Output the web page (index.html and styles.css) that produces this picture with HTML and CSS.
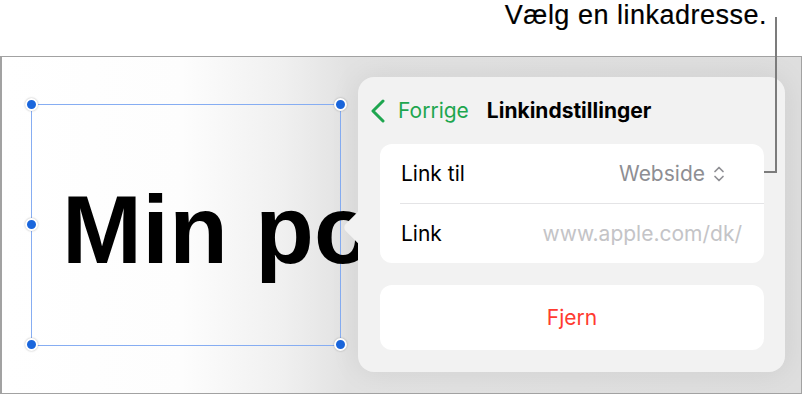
FILE: index.html
```html
<!DOCTYPE html>
<html lang="da">
<head>
<meta charset="utf-8">
<link rel="stylesheet" href="styles.css">
</head>
<body>
<div class="callout"><span class="callout-text">Vælg en linkadresse.</span></div>
<div class="callout-line"></div>
<div class="canvas">
  <div class="selection">
    <span class="title">Min po</span>
    <i class="handle h-tl"></i><i class="handle h-tr"></i><i class="handle h-ml"></i><i class="handle h-bl"></i><i class="handle h-br"></i>
  </div>
  <div class="popover">
    <div class="arrow"></div>
    <div class="pop-header">
      <svg class="back-chev" width="16" height="24" viewBox="0 0 16 24"><polyline points="13,2 3,12 13,22" fill="none" stroke="#1ea64f" stroke-width="3" stroke-linecap="round" stroke-linejoin="round"/></svg>
      <span class="back-label">Forrige</span>
      <span class="pop-title">Linkindstillinger</span>
    </div>
    <div class="card">
      <div class="row row-first">
        <span class="label">Link til</span>
        <span class="value">Webside</span>
        <svg class="updown" width="12" height="18" viewBox="0 0 12 18"><polyline points="2,6.5 6,2.5 10,6.5" fill="none" stroke="#8e8e93" stroke-width="1.7" stroke-linecap="round" stroke-linejoin="round"/><polyline points="2,11.5 6,15.5 10,11.5" fill="none" stroke="#8e8e93" stroke-width="1.7" stroke-linecap="round" stroke-linejoin="round"/></svg>
      </div>
      <div class="divider"></div>
      <div class="row">
        <span class="label">Link</span>
        <span class="url">www.apple.com/dk/</span>
      </div>
    </div>
    <div class="card remove">Fjern</div>
  </div>
</div>
</body>
</html>
```
FILE: styles.css
```css
* { box-sizing: border-box; }
html, body { margin: 0; padding: 0; }
body {
  width: 804px;
  height: 395px;
  overflow: hidden;
  background: #fff;
  position: relative;
  font-family: Inter, "Liberation Sans", sans-serif;
}
.callout {
  height: 56px;
  display: flex;
  justify-content: flex-end;
  align-items: flex-start;
  padding: 0 37px 0 0;
}
.callout-text {
  font-family: "Liberation Sans", Arial, sans-serif;
  font-size: 27px;
  line-height: normal;
  letter-spacing: 0.5px;
  color: #000;
  -webkit-text-stroke: 0.2px #000;
}
.callout-line {
  position: absolute;
  left: 764px;
  top: 17px;
  width: 13px;
  height: 156px;
  border-right: 2px solid #7c7c7c;
  border-bottom: 2px solid #7c7c7c;
  z-index: 5;
}
.canvas {
  position: relative;
  width: 802px;
  height: 338px;
  border: 1px solid #a2a2a2;
  border-left-width: 2px;
  overflow: hidden;
  background: linear-gradient(90deg, #ffffff 0, #fdfdfd 180px, #f0f0f0 280px, #e2e2e2 345px, #dedede 100%);
}
.selection {
  position: absolute;
  left: 29px;
  top: 47px;
  width: 310px;
  height: 242px;
  border: 1px solid #86adf2;
  padding: 77px 0 0 30px;
  display: flex;
  align-items: flex-start;
}
.title {
  font-family: "Liberation Sans", Arial, sans-serif;
  font-weight: bold;
  font-size: 96px;
  line-height: 96px;
  color: #000;
  white-space: nowrap;
  letter-spacing: 0.3px;
}
.handle {
  position: absolute;
  width: 13px;
  height: 13px;
  border-radius: 50%;
  background: #1a66dc;
  border: 2px solid #fff;
  box-shadow: 0 0 2px rgba(0,0,0,0.3);
  margin: -7px 0 0 -7px;
}
.h-tl { left: 0; top: 0; }
.h-tr { left: 309px; top: 0; }
.h-ml { left: 0; top: 120px; }
.h-bl { left: 0; top: 240px; }
.h-br { left: 309px; top: 240px; }
.popover {
  position: absolute;
  left: 356px;
  top: 20px;
  width: 427px;
  height: 295px;
  background: #f2f2f2;
  border-radius: 16px;
  box-shadow: 0 0 30px rgba(0,0,0,0.08);
  padding: 0 21px 0 22px;
  z-index: 2;
}
.arrow {
  position: absolute;
  left: -11px;
  top: 139px;
  width: 23px;
  height: 23px;
  background: #f2f2f2;
  transform: rotate(45deg);
  border-radius: 0 0 0 5px;
}
.pop-header {
  height: 67px;
  display: flex;
  align-items: center;
  margin-left: -10px;
  position: relative;
}
.back-chev { margin-right: 12px; margin-top: 1px; }
.back-label {
  color: #1ea64f;
  font-size: 21px;
  margin-right: 18px;
}
.pop-title {
  font-weight: 700;
  font-size: 21px;
  color: #000;
}
.card {
  background: #fff;
  border-radius: 12px;
}
.row {
  height: 59px;
  display: flex;
  align-items: center;
  padding: 0 22px 0 21px;
  font-size: 21px;
}
.row-first { padding-right: 39px; }
.label { color: #000; flex: 1; }
.value { color: #8e8e93; margin-right: 8px; }
.url { color: #c4c4c7; }
.divider {
  height: 1px;
  background: #e4e4e6;
  margin-left: 20px;
}
.remove {
  margin-top: 22px;
  height: 65px;
  display: flex;
  align-items: center;
  justify-content: center;
  color: #ff3b30;
  font-size: 21px;
}
```
